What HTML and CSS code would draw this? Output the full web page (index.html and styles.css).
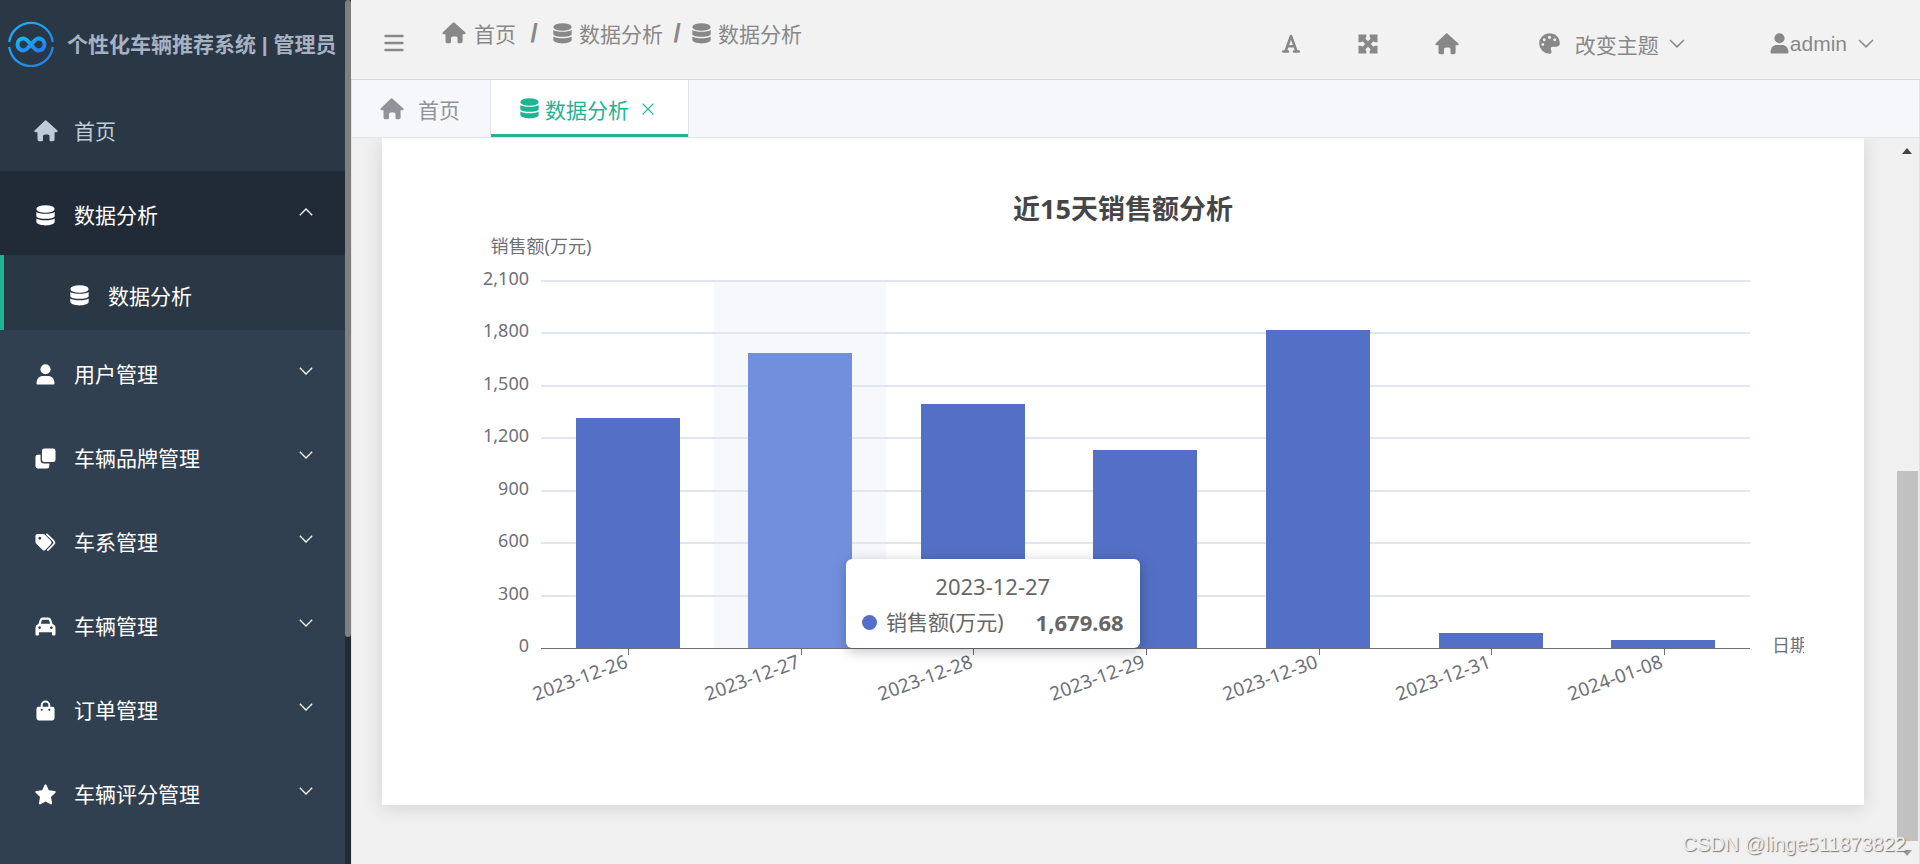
FILE: index.html
```html
<!DOCTYPE html>
<html lang="zh-CN">
<head>
<meta charset="utf-8">
<title>个性化车辆推荐系统 | 管理员</title>
<link rel="stylesheet" href="styles.css">
</head>
<body>
<svg class="sprite" aria-hidden="true">
  <symbol id="i-home" viewBox="0 0 24 24"><path d="M12 1.2 23.4 11.4q.8 1.9-1.2 1.9H20.600V20.500q0 1.700-1.700 1.700h-2.200q-1.200 0-1.200-1.200V17q0-1.500-1.500-1.500h-3Q9 15.500 9 17v4q0 1.200-1.200 1.200H5.200q-1.700 0-1.700-1.700V13.300H1.800Q-.2 13.300.6 11.400L11 1.600Q12 .8 13 1.600Z"/></symbol>
  <symbol id="i-db" viewBox="0 0 20 22"><ellipse cx="10" cy="4.200" rx="9.600" ry="4"/><path d="M.4 7.400C3 9.900 17 9.900 19.600 7.400V12C17.500 15.200 2.500 15.200.4 12Z"/><path d="M.4 14.200C3 16.700 17 16.700 19.600 14.200V18.200C17 22.600 3 22.600.4 18.200Z"/></symbol>
  <symbol id="i-user" viewBox="0 0 20 22"><circle cx="10" cy="5.500" r="5.300"/><path d="M.6 20.500C.6 15 4 12.600 7 12.600h6c3 0 6.400 2.400 6.400 7.900q0 1-1 1H1.600q-1 0-1-1Z"/></symbol>
  <symbol id="i-copy" viewBox="0 0 22 22"><rect x="7.300" y=".5" width="14.200" height="14.200" rx="2.500"/><path d="M5.800 7H3Q.5 7 .5 9.500V19Q.5 21.500 3 21.500h9.500q2.500 0 2.500-2.500V16.200H9.500q-3.700 0-3.700-3.700Z"/></symbol>
  <symbol id="i-tags" viewBox="0 0 22 22"><path fill-rule="evenodd" d="M.5 4Q.5 2 2.500 2H8.500q1 0 1.700.7l6.600 6.700q1.400 1.600 0 3.200l-6 6.300q-1.400 1.200-2.800 0L1.200 12Q.5 11.300.5 10.300ZM5 5a1.500 1.500 0 1 0 .01 0Z"/><path d="M12.500 2.400l7 7q1.600 1.700 0 3.400l-6 6.200" fill="none" stroke="currentColor" stroke-width="1.800" stroke-linecap="round"/></symbol>
  <symbol id="i-car" viewBox="0 0 22 22"><path fill-rule="evenodd" d="M3.600 8.300 5 3.800Q5.800 1.500 8.200 1.500h5.600q2.400 0 3.200 2.300l1.400 4.500Q21.500 9.500 21.500 12.500V19q0 1.300-1.300 1.300H19q-1.200 0-1.200-1.300V17H4.200v2q0 1.300-1.200 1.300H1.800Q.5 20.300.5 19v-6.500Q.5 9.500 3.600 8.300ZM6 8.200H16L14.800 4.700Q14.500 4 13.800 4H8.200q-.7 0-1 .7ZM4.800 10.800a1.400 1.400 0 1 0 .01 0ZM17.200 10.800a1.400 1.400 0 1 0 .01 0Z"/></symbol>
  <symbol id="i-bag" viewBox="0 0 20 22"><path fill-rule="evenodd" d="M5 7V5.500a5 5 0 0 1 10 0V7h2.200Q19.500 7 19.500 9.300V18q0 3.600-3.600 3.600H4.100Q.5 21.600.5 18V9.300Q.5 7 2.800 7ZM7 7h6V5.500a3 3 0 0 0-6 0ZM6 9.200a1 1 0 1 0 .01 0ZM14 9.200a1 1 0 1 0 .01 0Z"/></symbol>
  <symbol id="i-star" viewBox="0 0 22 22"><path d="M10 1.100q1-1.500 2 0l2.500 5.500 6.100.8q1.800.5.500 2L16.700 13.600l1.200 6.300q.1 1.900-1.700 1.300L11 18.400 5.800 21.200q-1.800.6-1.700-1.300l1.200-6.300L.9 9.400q-1.300-1.500.5-2l6.100-.8Z"/></symbol>
  <symbol id="i-down" viewBox="0 0 14 8"><path d="M.8.8 7 7 13.200.8" fill="none" stroke="currentColor" stroke-width="1.300"/></symbol>
  <symbol id="i-up" viewBox="0 0 14 8"><path d="M.8 7.200 7 1l6.200 6.200" fill="none" stroke="currentColor" stroke-width="1.300"/></symbol>
  <symbol id="i-font" viewBox="0 0 18 19"><path d="M1.200 17.500H6M12 17.500H16.800M3.600 17 9 2 14.400 17M5.600 12.200H12.400" fill="none" stroke="currentColor" stroke-width="2.600" stroke-linecap="round" stroke-linejoin="round"/></symbol>
  <symbol id="i-expand" viewBox="0 0 20 20"><path d="M.5.500H8.300V3L7.300 4.400 10 7.200 12.700 4.400 11.700 3V.5H19.500V8.300H17L15.600 7.300 12.800 10 15.600 12.700 17 11.700H19.500V19.500H11.700V17L12.700 15.600 10 12.800 7.300 15.600 8.300 17V19.500H.5V11.700H3L4.400 12.700 7.200 10 4.400 7.300 3 8.300H.5Z"/></symbol>
  <symbol id="i-palette" viewBox="0 0 22 22"><path fill-rule="evenodd" d="M11 .2C17 .2 21.800 4.500 21.800 10.800c0 3-2 3.600-4 3.600h-3.400c-2 0-2.600 1.800-1.800 3.400C13.700 20 13.200 21.800 11 21.800A10.800 10.800 0 0 1 11 .2ZM11 3a1.600 1.600 0 1 0 .01 0ZM5.500 5.600a1.500 1.500 0 1 0 .01 0ZM16.500 5.600a1.500 1.500 0 1 0 .01 0ZM4 10.600a1.500 1.500 0 1 0 .01 0Z"/></symbol>
</svg>

<div class="app">
  <aside class="side">
    <div class="side-body">
      <div class="brand">
        <svg class="logo" viewBox="0 0 46 46" aria-hidden="true">
          <defs><linearGradient id="lg" x1="0" y1="0" x2="1" y2="1"><stop offset="0" stop-color="#14b8f8"/><stop offset="1" stop-color="#2878f0"/></linearGradient></defs>
          <g fill="none" stroke="url(#lg)"><path d="M1.200 21A22 22 0 0 1 44.800 21M1.200 26A22 22 0 0 0 44.800 26" stroke-width="2.200"/><path d="M23 23.500C19 18.500 17 17.500 15.500 17.500a6 6 0 0 0 0 12c5 0 10-12 15-12a6 6 0 0 1 0 12c-3 0-5-3-7.500-6Z" stroke-width="4"/></g>
        </svg>
        <h1>个性化车辆推荐系统 | 管理员</h1>
      </div>
      <nav class="menu" aria-label="主菜单">
        <a class="item home" href="#"><svg class="ic wide"><use href="#i-home"/></svg><span>首页</span></a>
        <button class="item open" aria-expanded="true"><svg class="ic"><use href="#i-db"/></svg><span>数据分析</span><svg class="chev"><use href="#i-up"/></svg></button>
        <a class="item sub" href="#" aria-current="page"><svg class="ic"><use href="#i-db"/></svg><span>数据分析</span></a>
        <button class="item"><svg class="ic"><use href="#i-user"/></svg><span>用户管理</span><svg class="chev"><use href="#i-down"/></svg></button>
        <button class="item"><svg class="ic"><use href="#i-copy"/></svg><span>车辆品牌管理</span><svg class="chev"><use href="#i-down"/></svg></button>
        <button class="item"><svg class="ic"><use href="#i-tags"/></svg><span>车系管理</span><svg class="chev"><use href="#i-down"/></svg></button>
        <button class="item"><svg class="ic"><use href="#i-car"/></svg><span>车辆管理</span><svg class="chev"><use href="#i-down"/></svg></button>
        <button class="item"><svg class="ic"><use href="#i-bag"/></svg><span>订单管理</span><svg class="chev"><use href="#i-down"/></svg></button>
        <button class="item"><svg class="ic"><use href="#i-star"/></svg><span>车辆评分管理</span><svg class="chev"><use href="#i-down"/></svg></button>
      </nav>
    </div>
    <div class="side-track"><div class="side-thumb"></div></div>
  </aside>

  <div class="main">
    <header class="top">
      <button class="burger" aria-label="折叠菜单"><svg viewBox="0 0 20 18"><path d="M1.500 2h17M1.500 9h17M1.500 16h17" stroke="currentColor" stroke-width="2.400" stroke-linecap="round"/></svg></button>
      <nav class="crumbs" aria-label="面包屑">
        <a href="#"><svg class="ic wide"><use href="#i-home"/></svg><span class="gap">首页</span></a>
        <b class="sep first">/</b>
        <a href="#"><svg class="ic"><use href="#i-db"/></svg><span>数据分析</span></a>
        <b class="sep">/</b>
        <a href="#"><svg class="ic"><use href="#i-db"/></svg><span>数据分析</span></a>
      </nav>
      <div class="tools">
        <button aria-label="字体"><svg class="t-font"><use href="#i-font"/></svg></button>
        <button aria-label="全屏"><svg class="t-exp"><use href="#i-expand"/></svg></button>
        <button aria-label="首页"><svg class="ic wide"><use href="#i-home"/></svg></button>
        <button class="theme"><svg class="ic"><use href="#i-palette"/></svg><span>改变主题</span><svg class="chev"><use href="#i-down"/></svg></button>
        <button class="account"><svg class="ic"><use href="#i-user"/></svg><span>admin</span><svg class="chev"><use href="#i-down"/></svg></button>
      </div>
    </header>

    <nav class="tabs" aria-label="标签页">
      <a class="tab" href="#"><svg class="ic wide"><use href="#i-home"/></svg><span>首页</span></a>
      <div class="tab active"><a href="#"><svg class="ic"><use href="#i-db"/></svg><span>数据分析</span></a><button aria-label="关闭"><svg viewBox="0 0 12 12"><path d="M.6.6 11.400 11.400M11.400.6.6 11.400" stroke="currentColor" stroke-width="1.300"/></svg></button></div>
    </nav>

    <div class="content">
      <section class="card">
        <div class="chart">
          <svg class="plot" viewBox="0 0 1482 667" role="img" aria-label="近15天销售额分析">
            <text class="title" x="741" y="81" text-anchor="middle">近15天销售额分析</text>
            <text class="lab" x="159" y="115" text-anchor="middle">销售额(万元)</text>
            <rect x="332" y="143" width="172" height="367" fill="#f6f8fc"/>
            <path class="grid" d="M159 143H1368M159 195H1368M159 248H1368M159 300H1368M159 353H1368M159 405H1368M159 458H1368"/>
            <g class="lab" text-anchor="end">
              <text x="147" y="147">2,100</text><text x="147" y="199">1,800</text><text x="147" y="252">1,500</text><text x="147" y="304">1,200</text><text x="147" y="357">900</text><text x="147" y="409">600</text><text x="147" y="462">300</text><text x="147" y="514">0</text>
            </g>
            <g fill="#5470c6">
              <rect x="194" y="280" width="104" height="230"/>
              <rect x="366" y="215" width="104" height="295" fill="#728fdd"/>
              <rect x="539" y="266" width="104" height="244"/>
              <rect x="711" y="312" width="104" height="198"/>
              <rect x="884" y="192" width="104" height="318"/>
              <rect x="1057" y="495" width="104" height="15"/>
              <rect x="1229" y="502" width="104" height="8"/>
            </g>
            <path class="axis" d="M159 510.500H1368M246.500 510V517M419.500 510V517M591.500 510V517M764.500 510V517M937.500 510V517M1109.500 510V517M1282.500 510V517"/>
            <g class="lab date" text-anchor="end">
              <text transform="translate(247 529) rotate(-20)">2023-12-26</text>
              <text transform="translate(419 529) rotate(-20)">2023-12-27</text>
              <text transform="translate(592 529) rotate(-20)">2023-12-28</text>
              <text transform="translate(764 529) rotate(-20)">2023-12-29</text>
              <text transform="translate(937 529) rotate(-20)">2023-12-30</text>
              <text transform="translate(1110 529) rotate(-20)">2023-12-31</text>
              <text transform="translate(1282 529) rotate(-20)">2024-01-08</text>
            </g>
            <svg x="1390" y="490" width="32" height="40"><text class="lab" x="0" y="24">日期</text></svg>
          </svg>
          <div class="tip">
            <div class="tip-date">2023-12-27</div>
            <div class="tip-row"><i></i><span>销售额(万元)</span><b>1,679.68</b></div>
          </div>
        </div>
      </section>
      <div class="track"><span class="arrow up"></span><div class="thumb"></div><span class="arrow down"></span></div>
    </div>
  </div>
</div>
<div class="mark">CSDN @linge511873822</div>
</body>
</html>
```
FILE: styles.css
```css
* { box-sizing: border-box; }
body {
  margin: 0;
  font-family: "Liberation Sans", "Noto Sans CJK SC", sans-serif;
  font-size: 21px;
  background: #f0f0f0;
  color: #888;
}
button { font: inherit; color: inherit; background: none; border: 0; padding: 0; cursor: pointer; }
a { color: inherit; text-decoration: none; }
svg { fill: currentColor; display: block; flex: none; }
.sprite { position: absolute; width: 0; height: 0; }
.ic { width: 21px; height: 21px; }
.ic.wide { width: 24px; height: 24px; }
.chev { width: 14px; height: 8px; }

.app { display: flex; height: 100vh; overflow: hidden; }

.side { display: flex; width: 351px; flex: none; background: #304050; overflow: hidden; }
.side-body { flex: 1; min-width: 0; }
.side-track { width: 6px; background: #212b38; }
.side-thumb { height: 637px; background: #7f7f7f; border-radius: 3px; }
.brand { display: flex; align-items: center; gap: 13px; height: 87px; padding-left: 8px; background: #2a3846; }
.logo { width: 46px; height: 46px; }
.brand h1 { margin: 0; padding-bottom: 2px; font-size: 21px; font-weight: bold; color: #a7b1c2; white-space: nowrap; }
.item {
  display: flex;
  align-items: center;
  width: 100%;
  height: 84px;
  padding: 4px 32px 0 35px;
  color: #fff;
  text-align: left;
}
.item span { padding-bottom: 2px; }
.item .ic { margin-right: 18px; }
.item .ic.wide { margin: 0 16px 0 -1px; }
.item .chev { margin: 0 0 6px auto; }
.item.home { background: #2a3846; color: #bfcbd9; }
.item.open { background: #212b38; }
.item.sub { height: 75px; padding: 6px 32px 0 65px; background: #2a3846; border-left: 4px solid #1fb393; }

.main { flex: 1; min-width: 0; display: flex; flex-direction: column; }
.top { display: flex; height: 80px; flex: none; background: #f2f2f2; border-bottom: 1px solid #d5d7dd; padding-right: 46px; }
.burger { margin: 6px 0 0 32px; }
.burger svg { width: 22px; height: 18px; }
.crumbs { display: flex; align-items: center; height: 66px; margin-left: 37px; }
.crumbs a { display: flex; align-items: center; gap: 6px; }
.crumbs .gap { margin-left: 2px; }
.sep { width: 28px; text-align: center; font-size: 26px; }
.sep.first { width: 36px; }
.tools { display: flex; align-items: center; margin-left: auto; padding-top: 8px; }
.tools button { display: flex; align-items: center; }
.t-font { width: 18px; height: 19px; margin-right: 58px; }
.t-exp { width: 20px; height: 20px; margin-right: 57px; }
.theme { margin-left: 80px; }
.theme span { margin: 0 10px 0 15px; }
.account { margin-left: 84px; }
.account span { margin-right: 11px; }
.tools .chev { width: 16px; height: 9px; }

.tabs { display: flex; height: 58px; flex: none; background: #f5f7fb; border: 1px solid #dfe3ea; border-top: 0; }
.tab { display: flex; align-items: center; padding-left: 28px; color: #909399; width: 138px; }
.tab .ic.wide { margin-right: 14px; }
.tab.active { width: 199px; background: #fff; color: #1fb393; border: solid #dfe3ea; border-width: 0 1px; box-shadow: inset 0 -3px #1fb393; }
.tab.active a { display: flex; align-items: center; gap: 5px; }
.tab.active button { margin-left: 13px; }
.tab.active button svg { width: 12px; height: 12px; }

.content { flex: 1; min-height: 0; display: flex; border: solid #dfe3ea; border-width: 0 1px; padding: 0 1px 0 30px; overflow: hidden; }
.card { flex: 1; min-width: 0; align-self: flex-start; margin-right: 32px; background: #fff; box-shadow: 0 3px 18px rgba(0, 0, 0, .12); }
.chart { position: relative; }
.plot { width: 100%; height: auto; font-family: "Noto Sans", "Noto Sans CJK SC", sans-serif; }
.title { font-size: 27px; font-weight: bold; fill: #464646; }
.lab { font-size: 18px; fill: #6e7079; }
.date { font-size: 19px; }
.grid { stroke: #e0e6f1; stroke-width: 2; }
.axis { stroke: #6e7079; stroke-width: 1; }
.tip {
  position: absolute;
  left: 464px;
  top: 421px;
  padding: 15px 16px 14px;
  border-radius: 6px;
  background: #fff;
  color: #666;
  line-height: 24px;
  font-family: "Noto Sans", "Noto Sans CJK SC", sans-serif;
  box-shadow: 1px 3px 14px rgba(0, 0, 0, .25);
}
.tip-date { text-align: center; font-size: 22px; }
.tip-row { display: flex; align-items: center; margin-top: 12px; white-space: nowrap; }
.tip-row i { width: 15px; height: 15px; border-radius: 50%; background: #5470c6; margin-right: 9px; }
.tip-row b { margin-left: 32px; font-size: 22px; }

.track { width: 22px; display: flex; flex-direction: column; align-items: center; padding: 10px 0 8px; }
.arrow { border: 5px solid transparent; }
.arrow.up { border-top: 0; border-bottom: 6px solid #444; }
.arrow.down { border-bottom: 0; border-top: 6px solid #999; margin-top: 9px; }
.thumb { width: 21px; height: 370px; margin-top: auto; background: #c1c1c1; }
.mark {
  position: absolute;
  right: 14px;
  bottom: 8px;
  font-size: 20px;
  color: #eee;
  text-shadow: 1px 1px 1px #777;
}
```
